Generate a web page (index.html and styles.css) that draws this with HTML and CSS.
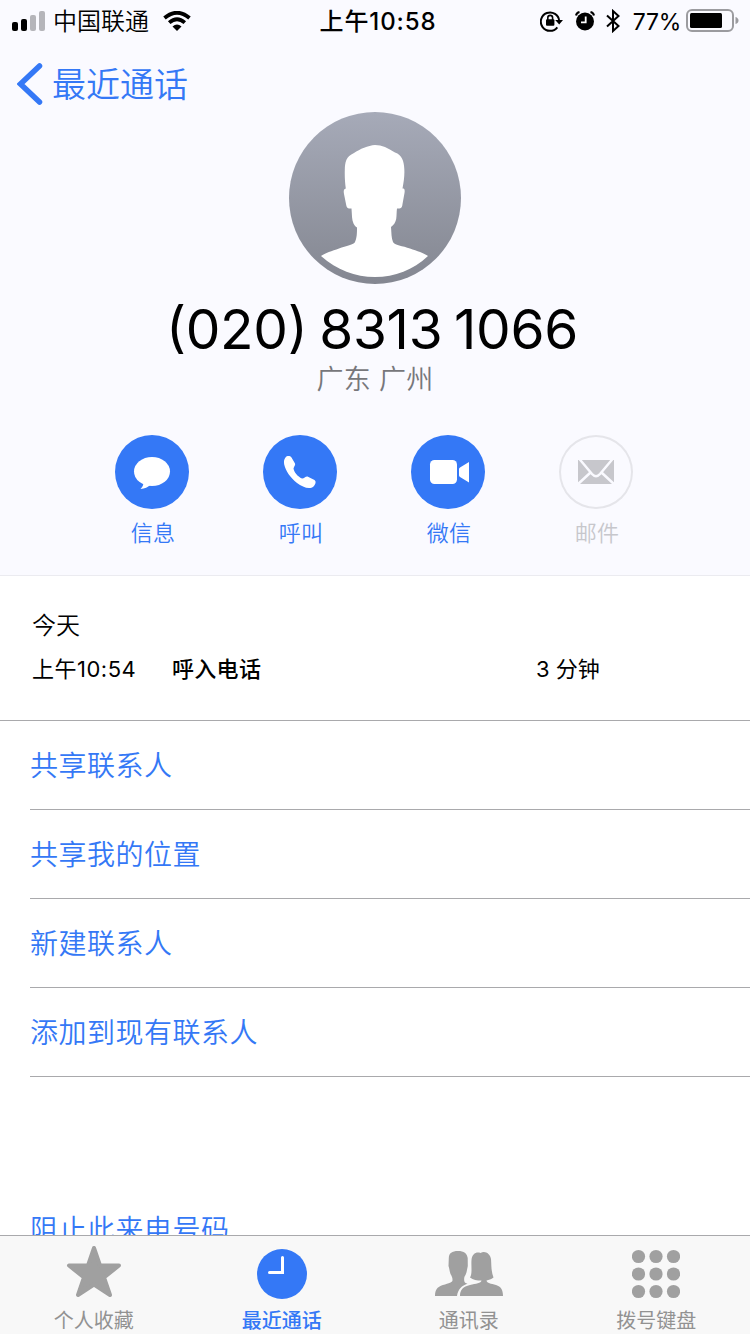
FILE: index.html
```html
<!DOCTYPE html>
<html lang="zh-CN">

<head>
  <meta charset="UTF-8">
  <meta name="viewport" content="width=device-width, initial-scale=1.0">
  <title>最近通话</title>
  <link rel="stylesheet" href="styles.css">
</head>

<body>
  <header class="header">
    <div class="status">
      <div class="status-left">
        <svg class="signal" width="34" height="21" viewBox="0 0 34 21">
          <rect x="0" y="12" width="6" height="9" rx="2" />
          <rect x="9" y="9" width="6" height="12" rx="2" />
          <rect class="off" x="18" y="5" width="6" height="16" rx="2" />
          <rect class="off" x="27" y="1" width="6" height="20" rx="2" />
        </svg>
        <span class="carrier">中国联通</span>
        <svg class="wifi" width="28" height="20" viewBox="0 0 28 20">
          <path d="M1.500 7 Q14 -3.500 26.500 7" />
          <path d="M6.200 11.600 Q14 4.900 21.800 11.600" />
          <path class="dot" d="M9.500 15.500 Q14 11.500 18.500 15.500 L14 20 Z" />
        </svg>
      </div>
      <div class="clock">上午10:58</div>
      <div class="status-right">
        <svg class="lock" width="23" height="22" viewBox="0 0 23 22">
          <path class="ring" d="M17.300 17.300 A9.200 9.200 0 1 1 19.200 11" />
          <path d="M15.200 10 H23 L19.200 14.500 Z" />
          <rect x="6" y="9.300" width="8.400" height="6.500" rx="1" />
          <path class="shackle" d="M7.800 10 V7.800 A2.400 2.400 0 0 1 12.600 7.800 V10" />
        </svg>
        <svg class="alarm" width="20" height="20" viewBox="0 0 20 20">
          <circle cx="10" cy="10.500" r="9" />
          <path class="ear" d="M1 4.500 Q1.500 1.700 4.500 1 M19 4.500 Q18.500 1.700 15.500 1" />
          <path class="hand" d="M10.700 5.500 V11.300 H6" />
        </svg>
        <svg class="bluetooth" width="14" height="24" viewBox="0 0 14 24">
          <path d="M1 6.500 L12.500 17 L7 22 V2 L12.500 7 L1 17.500" />
        </svg>
        <span class="percent">77%</span>
        <svg class="battery" width="53" height="24" viewBox="0 0 53 24">
          <rect class="shell" x="1" y="1" width="46" height="21" rx="5" />
          <rect x="4" y="4" width="32" height="15" rx="1.500" />
          <path class="cap" d="M49.500 8 Q52.500 9 52.500 11.500 Q52.500 14 49.500 15 Z" />
        </svg>
      </div>
    </div>

    <nav class="navigation">
      <svg width="26" height="42" viewBox="0 0 26 42">
        <path d="M22.500 3 L3.500 21 L22.500 39" />
      </svg>
      <a href="#">最近通话</a>
    </nav>

    <div class="contact">
      <svg class="avatar" width="172" height="172" viewBox="0 0 172 172">
        <defs>
          <linearGradient id="shade" x1="0" y1="0" x2="0" y2="1">
            <stop offset="0" stop-color="#a6aab8" />
            <stop offset="1" stop-color="#848791" />
          </linearGradient>
        </defs>
        <circle cx="86" cy="86" r="86" fill="url(#shade)" />
        <path fill="#fff" d="M86 33 C79 33.500 71 37 65 41 C57 44.500 56 50 55.800 58 C55.600 65 56 71 56.800 76.500 C54.500 77 54.500 79 55 82 L57 92 C57.800 96 58.500 97 62.500 96.500 C63 103 62.800 108 64.500 111.500 C65.500 113.500 66.500 114.500 68 115.500 C68 122 67.800 126 66 130 C65 132.500 57 134 50 136.500 C43 139 36 141 32 144 C48 158 66 165 86 165 C106 165 124 158 139 144 C135 141 128 139 121 136.500 C114 134 105 133 104 130 C102.300 126 102.500 121 102 115 C105 113 106.500 110 107.200 107 C107.800 103 107.500 100 108 96.500 C112 97 113 96 113.500 92 L115.500 81 C116 77.500 115.500 76.500 113.500 76.500 C114.800 70 115.700 63 115.300 57 C115 49 113 43 106 40.500 C99 36 93 33 86 33 Z" />
      </svg>
      <h1>(020) 8313 1066</h1>
      <p class="place">广东 广州</p>
    </div>

    <div class="actions">
      <div class="action">
        <svg class="disc" width="74" height="74" viewBox="0 0 74 74">
          <ellipse cx="37" cy="36.500" rx="18" ry="14.500" />
          <path d="M28 46 Q29.500 50 25.500 54 Q32 53.500 35 50 L37 47 Z" />
        </svg>
        <span>信息</span>
      </div>
      <div class="action">
        <svg class="disc" width="74" height="74" viewBox="0 0 74 74">
          <path d="M22.500 22.500 C24 20.500 27 20.700 28.500 22.500 L32 28.500 C32.700 30 31 31.500 30.500 33.500 C31 37 34.500 41.500 39 43.500 C41 43.700 42.500 41.200 44.500 41.500 L51.500 45 C53.500 46.500 52.500 49.500 50.500 51.500 C46.500 55 39.500 52 34 48 C27.500 43 22.500 35.500 21.200 29.500 C20.700 26.500 21 24.300 22.500 22.500 Z" />
        </svg>
        <span>呼叫</span>
      </div>
      <div class="action">
        <svg class="disc" width="74" height="74" viewBox="0 0 74 74">
          <rect x="19" y="25" width="27" height="24" rx="4.500" />
          <path d="M58 27 V47.500 L49 42 Q48 41.500 48 40.300 V34 Q48 33 49 32.400 Z" />
        </svg>
        <span>微信</span>
      </div>
      <div class="action disabled">
        <svg class="disc" width="74" height="74" viewBox="0 0 74 74">
          <rect x="19" y="25" width="36" height="24" />
          <path class="fold" d="M20 23.500 L33 39 Q37 43.500 41 39 L54 23.500 M18 50 L31.500 37.500 M56 50 L42.500 37.500" />
        </svg>
        <span>邮件</span>
      </div>
    </div>
  </header>

  <main class="content">
    <section class="log">
      <div class="day">今天</div>
      <div class="call">
        <span class="time">上午10:54</span>
        <span class="type">呼入电话</span>
        <span class="duration">3 分钟</span>
      </div>
    </section>

    <ul class="options">
      <li><a href="#">共享联系人</a></li>
      <li><a href="#">共享我的位置</a></li>
      <li><a href="#">新建联系人</a></li>
      <li><a href="#">添加到现有联系人</a></li>
      <li class="block"><a href="#">阻止此来电号码</a></li>
    </ul>
  </main>

  <footer class="tabs">
    <a href="#" class="tab">
      <svg width="56" height="54" viewBox="0 0 56 54">
        <path class="star" d="M28 3 L34 20.500 L53 20.500 L38 32.500 L44 50 L28 39.500 L12 50 L18 32.500 L3 20.500 L22 20.500 Z" />
      </svg>
      <span>个人收藏</span>
    </a>
    <a href="#" class="tab active">
      <svg width="50" height="54" viewBox="0 0 50 54">
        <circle cx="25" cy="29" r="25" />
        <path class="hand" d="M25.500 12.500 V27.500 H12.500" />
      </svg>
      <span>最近通话</span>
    </a>
    <a href="#" class="tab">
      <svg width="70" height="54" viewBox="0 0 70 54">
        <path d="M1 51 C1 43 5 41 11 39.500 C17 37.500 18.500 37 18.500 35 C18.500 32 17.500 31 16.500 29 C15.500 26 15.500 24 14.500 21 L14.800 13 C15 8 18 6 24 6 C30 6 33 8.500 33.700 13 L33.800 21 C33 24 33 27 31.500 30 C30 32 30 34 30.300 36 C30.500 37.500 31.500 38 33.500 38.700 C28 40.500 24 44 23 51 Z" />
        <path d="M26 51 C26 45 29 41.500 36 40 C42 38.500 47 38.500 47.500 35.500 C43 35.500 39 35 36 32.500 C38.500 29 37 21 37.500 15 C38 9 42 6.500 46.500 8 C51 5.500 56 8.500 57 14 C57.500 20 57 26 59.500 32.500 C57 34.500 55 35 52.500 35.500 C53 38.500 57 38.500 62 40 C67 41.500 69 45 69 51 Z" />
      </svg>
      <span>通讯录</span>
    </a>
    <a href="#" class="tab">
      <svg width="48" height="54" viewBox="0 0 48 54">
        <circle cx="6.500" cy="11.500" r="6.600" />
        <circle cx="24" cy="11.500" r="6.600" />
        <circle cx="41.500" cy="11.500" r="6.600" />
        <circle cx="6.500" cy="29" r="6.600" />
        <circle cx="24" cy="29" r="6.600" />
        <circle cx="41.500" cy="29" r="6.600" />
        <circle cx="6.500" cy="46.500" r="6.600" />
        <circle cx="24" cy="46.500" r="6.600" />
        <circle cx="41.500" cy="46.500" r="6.600" />
      </svg>
      <span>拨号键盘</span>
    </a>
  </footer>
</body>

</html>
```
FILE: styles.css
```css
* {
  box-sizing: border-box;
}

body {
  font-family: Inter, "Noto Sans CJK SC", sans-serif;
  margin: 0;
  height: 1334px;
  display: flex;
  flex-direction: column;
  overflow: hidden;
  background-color: white;
  color: black;
}

a {
  color: #3478f6;
  text-decoration: none;
}

svg {
  display: block;
  flex: none;
}

.header {
  height: 576px;
  flex: none;
  background-color: #fafaff;
  border-bottom: 1px solid #ebebf0;
}

/* status bar */

.status {
  display: grid;
  grid-template-columns: 1fr auto 1fr;
  align-items: center;
  height: 40px;
  padding: 0 11px 0 12px;
  font-size: 24px;
  line-height: 38px;
}

.status-left,
.status-right {
  display: flex;
  align-items: center;
}

.status-right {
  justify-content: flex-end;
}

.signal .off {
  fill: #b5b5ba;
}

.carrier {
  margin: 0 14px 0 7px;
  padding-top: 3px;
  font-weight: 350;
}

.wifi path {
  fill: none;
  stroke: black;
  stroke-width: 3.800;
}

.wifi .dot {
  fill: black;
  stroke: none;
}

.clock {
  padding: 3px 0 0 5px;
  font-weight: 500;
  letter-spacing: 0.9px;
}

.lock .ring {
  fill: none;
  stroke: black;
  stroke-width: 2;
}

.lock .shackle {
  fill: none;
  stroke: black;
  stroke-width: 1.600;
}

.alarm {
  margin-left: 12px;
}

.alarm .ear {
  fill: none;
  stroke: black;
  stroke-width: 2;
}

.alarm .hand {
  fill: none;
  stroke: white;
  stroke-width: 1.800;
}

.bluetooth {
  margin-left: 11px;
}

.bluetooth path {
  fill: none;
  stroke: black;
  stroke-width: 2;
}

.percent {
  margin: 0 5px 0 13px;
  padding-top: 2px;
  font-size: 23px;
  letter-spacing: -0.3px;
}

.battery {
  margin-top: 1px;
}

.battery .shell {
  fill: none;
  stroke: #9b9b9f;
  stroke-width: 2;
}

.battery .cap {
  fill: #9b9b9f;
}

/* back link */

.navigation {
  display: flex;
  align-items: center;
  gap: 9px;
  height: 64px;
  padding-left: 17px;
  margin: 12px 0 -4px;
  font-size: 34px;
  font-weight: 350;
}

.navigation a {
  padding-bottom: 3px;
}

.navigation path {
  fill: none;
  stroke: #3478f6;
  stroke-width: 5.500;
  stroke-linecap: round;
}

/* contact */

.contact {
  display: flex;
  flex-direction: column;
  align-items: center;
}

h1 {
  margin: 12px 6px 0 0;
  font-size: 55px;
  font-weight: 400;
  line-height: 66px;
  letter-spacing: -0.3px;
  word-spacing: -3.5px;
  font-feature-settings: "case";
}

.place {
  margin: 2px 0 0;
  font-size: 27px;
  font-weight: 350;
  line-height: 32px;
  letter-spacing: 0.3px;
  color: #77777b;
}

.actions {
  display: flex;
  justify-content: center;
  gap: 74px;
  margin: 39px 2px 0 0;
}

.action {
  display: flex;
  flex-direction: column;
  align-items: center;
  width: 74px;
  gap: 8px;
  font-size: 22px;
  font-weight: 350;
  line-height: 32px;
  letter-spacing: 0.3px;
  color: #3478f6;
}

.action span {
  padding-left: 2px;
}

.disc {
  border-radius: 50%;
  background-color: #3478f6;
  fill: white;
}

.disabled {
  color: #c7c7cc;
}

.disabled .disc {
  background-color: transparent;
  box-shadow: inset 0 0 0 2px #e5e5ea;
  fill: #c7c7cc;
}

.fold {
  fill: none;
  stroke: #fafaff;
  stroke-width: 2.500;
}

/* call log and options */

.content {
  flex: 1;
  min-height: 0;
  overflow: hidden;
}

.log {
  height: 145px;
  padding: 32px 32px 0;
  border-bottom: 1px solid #a9a9ac;
}

.day {
  font-size: 24px;
  font-weight: 350;
  line-height: 36px;
}

.call {
  display: grid;
  grid-template-columns: 140px 364px auto;
  margin-top: 9px;
  font-size: 22px;
  line-height: 32px;
}

.time {
  letter-spacing: 0.5px;
}

.type {
  font-weight: 500;
  letter-spacing: 0.3px;
}

.options {
  list-style-type: none;
  margin: 0;
  padding: 0 0 0 30px;
}

.options li {
  height: 89px;
  padding-top: 1px;
  border-bottom: 1px solid #a9a9ac;
  font-size: 28px;
  font-weight: 350;
  line-height: 88px;
  letter-spacing: 0.5px;
}

.options .block {
  margin-top: 108px;
}

/* bottom tabs */

.tabs {
  display: grid;
  grid-template-columns: repeat(4, 1fr);
  flex: none;
  height: 99px;
  border-top: 1px solid #a9a9ac;
  background-color: #f8f8f8;
}

.tab {
  display: flex;
  flex-direction: column;
  align-items: center;
  padding-top: 9px;
  color: #929292;
  font-size: 20px;
  line-height: 30px;
}

.tab svg {
  fill: #a0a0a0;
  margin-bottom: 7px;
}

.tab .star {
  stroke: #a0a0a0;
  stroke-width: 4;
  stroke-linejoin: round;
}

.tab .hand {
  fill: none;
  stroke: white;
  stroke-width: 3;
  stroke-linecap: round;
}

.tab.active {
  padding-left: 1px;
  color: #3478f6;
  font-weight: 500;
}

.active svg {
  fill: #3478f6;
}
```
